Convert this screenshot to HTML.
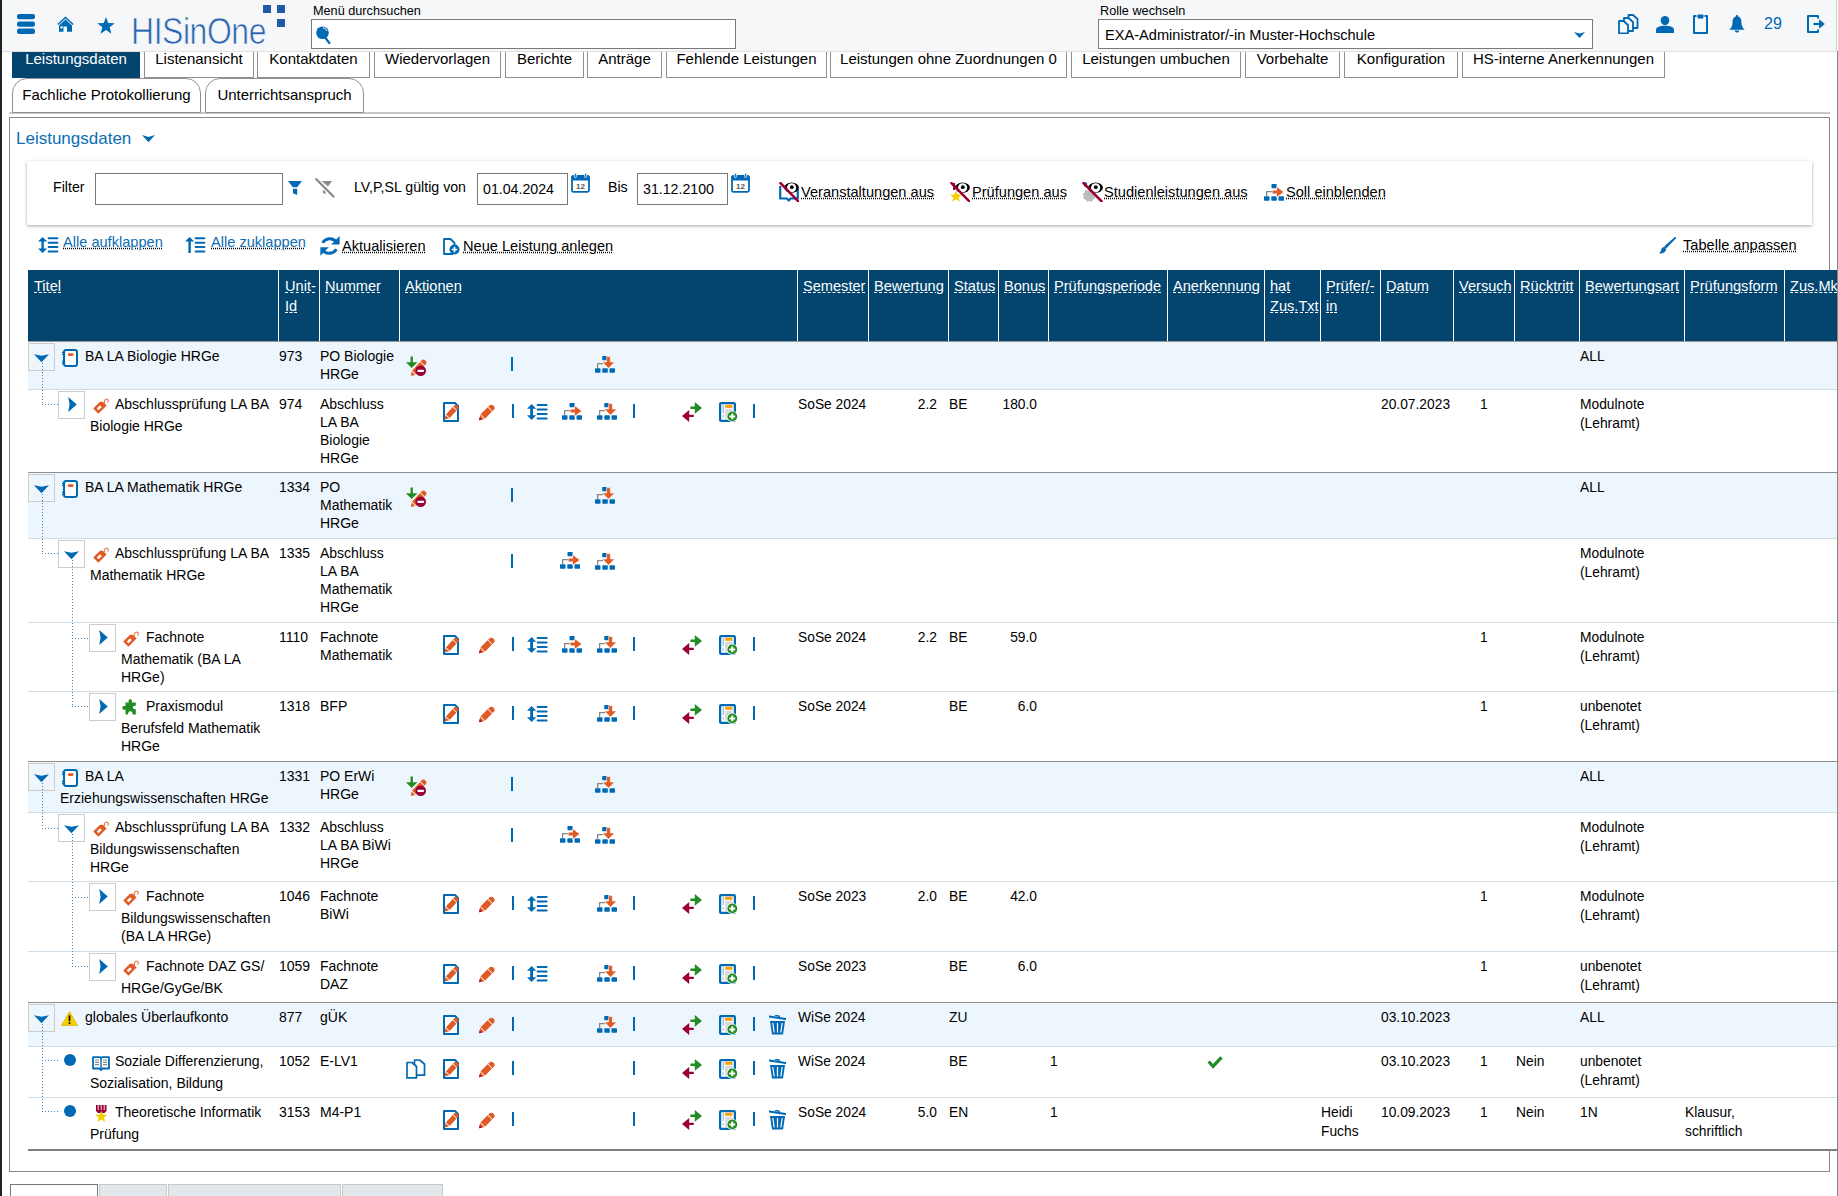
<!DOCTYPE html><html><head><meta charset="utf-8"><title>HISinOne</title><style>
html,body{margin:0;padding:0;background:#fff;overflow:hidden;width:1838px;height:1196px}
body{position:relative;font-family:"Liberation Sans",sans-serif;color:#222}
.t{position:absolute;white-space:nowrap}
.b{position:absolute;box-sizing:border-box}
.i{position:absolute;overflow:visible}
.u{text-decoration:underline dotted #000;text-underline-offset:1px}
.hu{text-decoration:underline dashed;text-decoration-thickness:1px;text-underline-offset:1px}
</style></head><body>

<svg width="0" height="0" style="position:absolute">
<defs>
<symbol id="ham" viewBox="0 0 18 20"><rect x="0" y="0" width="18" height="5.3" rx="2.2" fill="#0069b4"/><rect x="0" y="7.4" width="18" height="5.3" rx="2.2" fill="#0069b4"/><rect x="0" y="14.6" width="18" height="5.3" rx="2.2" fill="#0069b4"/></symbol>
<symbol id="home" viewBox="0 0 17 16"><path d="M8.5 0.5 L0.3 8 L1.3 9 L8.5 2.4 L15.7 9 L16.7 8 Z" fill="#0069b4"/><path d="M8.5 3.6 L2 9.4 V15.8 H6.5 V10.5 H10 V15.8 H15 V9.4 Z" fill="#0069b4"/><rect x="3.5" y="10.3" width="2.2" height="2.2" fill="#fff"/></symbol>
<symbol id="star" viewBox="0 0 18 17"><path d="M9 0 L11.2 6.1 L17.8 6.3 L12.6 10.3 L14.5 16.8 L9 13 L3.5 16.8 L5.4 10.3 L0.2 6.3 L6.8 6.1 Z" fill="#0069b4"/></symbol>
<symbol id="mag" viewBox="0 0 15 18"><circle cx="6.5" cy="6.8" r="6.3" fill="#0069b4"/><path d="M7 1.8 A4.6 4.6 0 0 1 11 5" stroke="#fff" stroke-width="1" fill="none"/><path d="M9.5 12 L13.3 17" stroke="#0069b4" stroke-width="2.2" stroke-linecap="round"/></symbol>
<symbol id="chevd" viewBox="0 0 11 6"><path d="M0 0 L5.5 1.6 L11 0 L5.5 6 Z" fill="#0069b4"/></symbol>
<symbol id="copy3" viewBox="0 0 21 20"><g fill="#f7f8fa" stroke="#0069b4" stroke-width="1.8" stroke-linejoin="round"><path d="M10.5 1 H15 L19.5 5 V14 H10.5 Z"/><path d="M6 4 H10.5 L15 8 V17 H6 Z"/><path d="M1 7 H5.5 L10 11 V19.4 H1 Z"/></g></symbol>
<symbol id="user" viewBox="0 0 18 17"><ellipse cx="9" cy="4.6" rx="4.3" ry="4.6" fill="#0069b4"/><path d="M0 17 V13.5 C0 11 4 9.7 9 9.7 C14 9.7 18 11 18 13.5 V17 Z" fill="#0069b4"/></symbol>
<symbol id="clip" viewBox="0 0 15 20"><path d="M3.5 2 H1 V19 H14 V2 H11.5" fill="none" stroke="#0069b4" stroke-width="2" stroke-linejoin="round"/><rect x="4.5" y="0.6" width="6" height="3.8" rx="0.8" fill="#0069b4"/></symbol>
<symbol id="bell" viewBox="0 0 16 18"><circle cx="8" cy="1.3" r="1.2" fill="#0069b4"/><path d="M8 1.5 C4.3 1.5 3.5 4.5 3.5 8 C3.5 11.5 2 13 0.3 14.8 H15.7 C14 13 12.5 11.5 12.5 8 C12.5 4.5 11.7 1.5 8 1.5 Z" fill="#0069b4"/><path d="M5.5 15.5 H10.5 C10 17 9 17.6 8 17.6 C7 17.6 6 17 5.5 15.5 Z" fill="#0069b4"/></symbol>
<symbol id="logout" viewBox="0 0 18 18"><path d="M11 3.5 V1 H1 V17 H11 V14.5" fill="none" stroke="#0069b4" stroke-width="2" stroke-linejoin="round"/><path d="M6.5 9 H13" stroke="#0069b4" stroke-width="2.2"/><path d="M12 4.2 L17.8 9 L12 13.8 Z" fill="#0069b4"/></symbol>
<symbol id="funnel" viewBox="0 0 14 14"><path d="M0 0 H14 L9.3 6 H4.7 Z" fill="#0069b4"/><path d="M4.8 6.3 H9.2 V7.5 H4.8Z" fill="#9cc3e3"/><path d="M5 8 H9.2 V14 L5 12.3 Z" fill="#0069b4"/></symbol>
<symbol id="funnelx" viewBox="0 0 20 20"><path d="M6.5 3 H17 L13 8.5 Z" fill="#8a8a8a"/><path d="M8 11.5 L10.5 14 V16.2 L8 15 Z" fill="#8a8a8a"/><path d="M1.3 1.2 L18.5 18.5" stroke="#8a8a8a" stroke-width="2.3" stroke-linecap="round"/></symbol>
<symbol id="cal" viewBox="0 0 19 20"><rect x="1" y="3" width="17" height="15.8" rx="1.5" fill="#fff" stroke="#0069b4" stroke-width="1.8"/><rect x="0.6" y="2.4" width="17.8" height="5" rx="1.2" fill="#0069b4"/><rect x="3.4" y="0.2" width="2" height="4.4" rx="1" fill="#0069b4" stroke="#fff" stroke-width="0.8"/><rect x="13.6" y="0.2" width="2" height="4.4" rx="1" fill="#0069b4" stroke="#fff" stroke-width="0.8"/><text x="9.5" y="16" font-family="Liberation Sans" font-weight="bold" font-size="8" fill="#555" text-anchor="middle">12</text></symbol>
<symbol id="eyedoc" viewBox="0 0 20 20"><path d="M1.2 4 V16.5 H8 L9.8 18.5 L11.6 16.5 H18.8 V7" fill="none" stroke="#0069b4" stroke-width="2.2" stroke-linejoin="round"/><ellipse cx="12.6" cy="5.6" rx="7.3" ry="5.2" fill="#000"/><ellipse cx="12.6" cy="5.7" rx="4.6" ry="4.5" fill="#fff"/><circle cx="12.8" cy="5.2" r="1.9" fill="#000"/><path d="M1.5 1.2 L19.2 19.2" stroke="#9b0034" stroke-width="2.6" stroke-linecap="round"/></symbol>
<symbol id="eyestar" viewBox="0 0 20 20"><path d="M4 1 V8" stroke="#9b0034" stroke-width="2"/><path d="M6 8.5 L7.6 12.6 L12 12.8 L8.6 15.5 L9.8 19.8 L6 17.3 L2.2 19.8 L3.4 15.5 L0 12.8 L4.4 12.6 Z" fill="#f5cc00"/><ellipse cx="12.6" cy="5.6" rx="7.3" ry="5.2" fill="#000"/><ellipse cx="12.6" cy="5.7" rx="4.6" ry="4.5" fill="#fff"/><circle cx="12.8" cy="5.2" r="1.9" fill="#000"/><path d="M1.5 1.2 L19.2 19.2" stroke="#9b0034" stroke-width="2.6" stroke-linecap="round"/></symbol>
<symbol id="eyegear" viewBox="0 0 21 20"><rect x="2" y="0.5" width="3" height="4" fill="#0069b4"/><circle cx="7" cy="13.5" r="5.3" fill="#bbb"/><path d="M7 6.5 L8.3 8.5 L11 8 L11.3 10.7 L13.8 12 L12.3 14.2 L13.5 16.6 L10.8 17.3 L10 20 L7.5 18.7 L5 20 L4.2 17.3 L1.2 16.8 L2 14 L0.4 12 L2.8 10.8 L3.1 8 L5.8 8.5 Z" fill="#bbb"/><ellipse cx="13.6" cy="5.6" rx="7.3" ry="5.2" fill="#000"/><ellipse cx="13.6" cy="5.7" rx="4.6" ry="4.5" fill="#fff"/><circle cx="13.8" cy="5.2" r="1.9" fill="#000"/><path d="M1.5 1.2 L19.5 19.2" stroke="#9b0034" stroke-width="2.6" stroke-linecap="round"/></symbol>
<symbol id="treer" viewBox="0 0 20 17"><rect x="7.5" y="0" width="5.2" height="4.2" rx="0.8" fill="#0069b4"/><path d="M2.6 12 V7.6 H9" fill="none" stroke="#888" stroke-width="1.3"/><rect x="0" y="12.2" width="5.5" height="4.6" rx="0.8" fill="#0069b4"/><rect x="7.3" y="12.2" width="5.5" height="4.6" rx="0.8" fill="#0069b4"/><rect x="14.5" y="12.2" width="5.5" height="4.6" rx="0.8" fill="#0069b4"/><path d="M8.3 6.2 H12.6 V2.6 L19.8 8 L12.6 13.4 V9.8 H8.3 Z" fill="#e05a24" stroke="#fff" stroke-width="0.6"/></symbol>
<symbol id="treed" viewBox="0 0 20 17"><rect x="7.2" y="0" width="5" height="4.2" rx="0.8" fill="#0069b4"/><path d="M2.6 12 V7.6 H8" fill="none" stroke="#888" stroke-width="1.3"/><rect x="0" y="12.2" width="5.5" height="4.6" rx="0.8" fill="#0069b4"/><rect x="7.3" y="12.2" width="5.5" height="4.6" rx="0.8" fill="#0069b4"/><rect x="14.5" y="12.2" width="5.5" height="4.6" rx="0.8" fill="#0069b4"/><path d="M11.6 0.6 H15.4 V6 H19.6 L13.5 12.3 L7.4 6 H11.6 Z" fill="#e05a24" stroke="#fff" stroke-width="0.6"/></symbol>
<symbol id="expall" viewBox="0 0 21 16"><path d="M4.6 0 L9.2 4.6 H5.8 V11.4 H9.2 L4.6 16 L0 11.4 H3.4 V4.6 H0 Z" fill="#0069b4"/><rect x="9.6" y="0.3" width="10.8" height="2" rx="1" fill="#0069b4"/><rect x="9.6" y="4.7" width="10.8" height="2" rx="1" fill="#0069b4"/><rect x="9.6" y="9.1" width="10.8" height="2" rx="1" fill="#0069b4"/><rect x="9.6" y="13.5" width="10.8" height="2" rx="1" fill="#0069b4"/></symbol>
<symbol id="colall" viewBox="0 0 21 16"><path d="M4.6 0 L9.2 4.6 H5.8 V16 H3.4 V4.6 H0 Z" fill="#0069b4"/><rect x="9.6" y="0.3" width="10.8" height="2" rx="1" fill="#0069b4"/><rect x="9.6" y="4.7" width="10.8" height="2" rx="1" fill="#0069b4"/><rect x="9.6" y="9.1" width="10.8" height="2" rx="1" fill="#0069b4"/><rect x="9.6" y="13.5" width="10.8" height="2" rx="1" fill="#0069b4"/></symbol>
<symbol id="refresh" viewBox="0 0 21 20"><path d="M3.6 6.8 C6.5 2.2 13.5 0.8 17.2 5.8" fill="none" stroke="#0069b4" stroke-width="3"/><path d="M20.6 0 V8.6 H12.2 Z" fill="#0069b4"/><path d="M17.4 13.2 C14.5 17.8 7.5 19.2 3.8 14.2" fill="none" stroke="#0069b4" stroke-width="3"/><path d="M1.4 11.2 H9.8 L1.4 19.7 Z" fill="#0069b4"/></symbol>
<symbol id="newdoc" viewBox="0 0 17 17"><path d="M10 16 H1 V1 H7.5 L11.5 5 V8" fill="none" stroke="#0069b4" stroke-width="1.8" stroke-linejoin="round"/><circle cx="11.5" cy="11.5" r="5" fill="#0069b4"/><path d="M11.5 8.8 V14.2 M8.8 11.5 H14.2" stroke="#fff" stroke-width="1.6"/></symbol>
<symbol id="brush" viewBox="0 0 17 17"><path d="M16.5 0.5 L7 10.5 L6.2 9.7 Z" fill="#0069b4" stroke="#0069b4" stroke-width="1.6" stroke-linejoin="round"/><path d="M5.5 10 C3 10 2.3 12 2 13.5 C1.8 14.8 1 15.5 0 16.5 C3 16.8 6.5 16 7.2 12 Z" fill="#0069b4"/></symbol>
<symbol id="tchevd" viewBox="0 0 15 8.4"><path d="M0 0.2 L7.5 1.7 L15 0.2 L7.5 8.3 Z" fill="#0069b4"/></symbol>
<symbol id="tchevr" viewBox="0 0 9 15"><path d="M0.2 0 L8.8 7.5 L0.2 15 L1.6 7.5 Z" fill="#0069b4"/></symbol>
<symbol id="note" viewBox="0 0 16 18"><rect x="2" y="1" width="13" height="16" rx="2.2" fill="#fff" stroke="#0069b4" stroke-width="2"/><rect x="5.8" y="4.2" width="5.8" height="2.8" rx="1.4" fill="#e05a24"/><path d="M0 3.3 H3.2 M0 5.3 H3.2 M0 12.3 H3.2 M0 14.5 H3.2" stroke="#0069b4" stroke-width="1.3"/><path d="M1.6 3 V15" stroke="#0069b4" stroke-width="1.2"/></symbol>
<symbol id="tag" viewBox="0 0 16 16"><g transform="translate(2.8,13.2) rotate(-45)"><path d="M0.7 -3.65 H9.6 L11.6 -1.6 V3.65 H0.7 A0.7 0.7 0 0 1 0 2.95 V-2.95 A0.7 0.7 0 0 1 0.7 -3.65Z" fill="#e05a24"/><rect x="2.6" y="-1.3" width="4.6" height="2.6" fill="#fff"/></g><path d="M11.6 5.2 C11 3 12 1 13.6 1.1 C15.4 1.2 15.9 3 14.6 4.6" fill="none" stroke="#e05a24" stroke-width="1.1" opacity="0.8"/></symbol>
<symbol id="puzzle" viewBox="0 0 16 16"><path d="M3.5 3.5 H6.8 C6.3 2.5 6.5 0.3 8.3 0.3 C10 0.3 10.3 2.5 9.8 3.5 H13.8 V7 C12.8 6.5 10.8 7 10.8 8.5 C10.8 10 12.8 10.5 13.8 10 V15.5 H10.5 C11 14.5 10 12.3 8.3 12.3 C6.5 12.3 5.8 14.5 6.2 15.5 H3.5 V10.5 C2.5 11 0.2 10.5 0.2 8.8 C0.2 7 2.5 6.8 3.5 7.2 Z" fill="#228b22"/></symbol>
<symbol id="warn" viewBox="0 0 17 15"><path d="M8.5 0.5 L16.7 14.5 H0.3 Z" fill="#f7d000" stroke="#d9a800" stroke-width="0.6" stroke-linejoin="round"/><rect x="7.6" y="4.3" width="1.8" height="6" rx="0.6" fill="#111"/><rect x="7.6" y="11.3" width="1.8" height="1.8" fill="#111"/></symbol>
<symbol id="book" viewBox="0 0 18 15"><path d="M1 1.2 H7.5 C8.3 1.2 9 1.8 9 2.5 C9 1.8 9.7 1.2 10.5 1.2 H17 V12.5 H10.5 L9 14 L7.5 12.5 H1 Z" fill="#fff" stroke="#0069b4" stroke-width="1.8" stroke-linejoin="round"/><path d="M3 4 H7 M3 6.3 H7 M3 8.6 H7 M11 4 H15 M11 6.3 H15 M11 8.6 H15" stroke="#888" stroke-width="1.2"/><path d="M9 2.5 V13" stroke="#0069b4" stroke-width="1.4"/></symbol>
<symbol id="medal" viewBox="0 0 15 18"><path d="M2 0 H12.5 V6 L10.5 8 H4 L2 6 Z" fill="#9b0034"/><path d="M4.2 0 V5 M7.2 0 V5 M10.2 0 V5" stroke="#fff" stroke-width="0.9"/><path d="M7.3 5.8 L9 9.6 L13.3 9.9 L10 12.6 L11.1 17 L7.3 14.6 L3.5 17 L4.6 12.6 L1.3 9.9 L5.6 9.6 Z" fill="#f5cc00"/></symbol>
<symbol id="dlminus" viewBox="0 0 22 21"><g transform="translate(5.9,20) rotate(-47)"><path d="M4.2 -2.8 H18.5 A2.8 2.8 0 0 1 18.5 2.8 H4.2 Z" fill="#e05a24"/><path d="M0 0 L4.2 -2.8 V2.8 Z" fill="#e05a24"/><rect x="3.9" y="-2.9" width="0.8" height="5.8" fill="#fff"/><rect x="16.4" y="-2.9" width="0.8" height="5.8" fill="#fff"/></g><path d="M6.7 0.5 V7" stroke="#fff" stroke-width="4.5"/><path d="M6.7 0.5 V7" stroke="#238b22" stroke-width="2.4"/><path d="M0.9 6.2 H12.5 L6.7 11.9 Z" fill="#238b22"/><circle cx="15.7" cy="14.8" r="5.3" fill="#9b0034"/><rect x="12.3" y="13.8" width="6.8" height="2.1" rx="0.8" fill="#fff"/></symbol>
<symbol id="docedit" viewBox="0 0 16 20"><path d="M1 1 H12 L15 4 V19 H1 Z" fill="#fff" stroke="#0069b4" stroke-width="2" stroke-linejoin="round"/><g transform="translate(1.6,17.6) rotate(-47)"><path d="M4.2 -2.6 H16.5 A2.6 2.6 0 0 1 16.5 2.6 H4.2 Z" fill="#e05a24"/><path d="M0 0 L4.2 -2.6 V2.6 Z" fill="#e05a24"/><rect x="3.9" y="-2.7" width="0.8" height="5.4" fill="#fff"/><rect x="14.6" y="-2.7" width="0.8" height="5.4" fill="#fff"/></g></symbol>
<symbol id="pencil" viewBox="0 0 17 18"><g transform="translate(1,17.3) rotate(-45)"><path d="M5 -3.1 H17.5 A3.1 3.1 0 0 1 17.5 3.1 H5 Z" fill="#e05a24"/><path d="M0 0 L5 -3.1 V3.1 Z" fill="#e05a24"/><path d="M0 0 L2.6 -1.6 V1.6 Z" fill="#9b0034"/><rect x="4.6" y="-3.2" width="0.9" height="6.4" fill="#fff"/><rect x="15.2" y="-3.2" width="0.9" height="6.4" fill="#fff"/></g></symbol>
<symbol id="indent" viewBox="0 0 21 16"><path d="M4.6 0 L9.2 4.8 H6 V11.2 H9.2 L4.6 16 L0 11.2 H3.2 V4.8 H0 Z" fill="#0069b4"/><rect x="9.6" y="0" width="11" height="2" rx="1" fill="#0069b4"/><rect x="9.6" y="4.6" width="11" height="2" rx="1" fill="#0069b4"/><rect x="9.6" y="9.1" width="11" height="2" rx="1" fill="#0069b4"/><rect x="9.6" y="13.6" width="11" height="2" rx="1" fill="#0069b4"/></symbol>
<symbol id="swap" viewBox="0 0 21 20"><path d="M8.4 4.6 H12.8 V0 L20 5.9 L12.8 11.8 V7 H8.4 Z" fill="#238b22"/><path d="M11.8 12.7 H7.2 V8.1 L0 14 L7.2 19.9 V15.1 H11.8 Z" fill="#9b0034"/></symbol>
<symbol id="docplus" viewBox="0 0 19 20"><rect x="1.1" y="1.1" width="14.8" height="17.8" rx="1" fill="#fff" stroke="#0069b4" stroke-width="2.2"/><rect x="3.6" y="3" width="1.3" height="8" fill="#8fbde0"/><rect x="6.2" y="2.8" width="7.3" height="3" fill="#ffa000"/><rect x="6.2" y="6.8" width="7.3" height="10" fill="#d9d9d9"/><rect x="3.6" y="13" width="1.3" height="3" fill="#ccc"/><circle cx="13.3" cy="14.4" r="5.6" fill="#fff"/><circle cx="13.3" cy="14.4" r="4.9" fill="#238b22"/><path d="M13.3 11.5 V17.3 M10.4 14.4 H16.2" stroke="#fff" stroke-width="2"/></symbol>
<symbol id="trash" viewBox="0 0 17 20"><path d="M0.3 1.5 L16.5 4" stroke="#0069b4" stroke-width="2" stroke-linecap="round"/><path d="M6 1.2 C6.2 0.3 10.5 0.8 10.6 1.9" fill="none" stroke="#0069b4" stroke-width="1.4"/><path d="M1 6 H16 L14 19.5 H3 Z" fill="#0069b4"/><path d="M3.8 8 L5.2 17.5 M8.5 8 V17.5 M13.2 8 L11.8 17.5" stroke="#fff" stroke-width="1.2"/></symbol>
<symbol id="copy2" viewBox="0 0 20 20"><g fill="#fff" stroke="#0069b4" stroke-width="1.7" stroke-linejoin="round"><path d="M8.5 1 H13.5 L18.5 5 V16.2 H8.5 Z"/><path d="M1 3.5 H6 L10.5 7.5 V18.9 H1 Z"/></g></symbol>
<symbol id="check" viewBox="0 0 16 13"><path d="M0.5 6.5 L2.8 4.4 L6 8 L13.3 0.3 L15.7 2.4 L6 12.7 Z" fill="#238b22"/></symbol>
</defs></svg>

<div class="b" style="left:0px;top:0px;width:2px;height:1196px;background:#1e2320"></div>
<div class="b" style="left:1837px;top:51px;width:1px;height:1145px;background:#858585"></div>
<div class="b" style="left:12px;top:42px;width:128px;height:36px;background:#04456f"></div>
<div class="t " style="left:12px;top:50px;font-size:15px;line-height:18px;color:#fff;width:128px;text-align:center">Leistungsdaten</div>
<div class="b" style="left:144px;top:42px;width:110px;height:36px;border:1px solid #909090;background:#fff"></div>
<div class="t " style="left:144px;top:50px;font-size:15px;line-height:18px;color:#000;width:110px;text-align:center">Listenansicht</div>
<div class="b" style="left:257px;top:42px;width:113px;height:36px;border:1px solid #909090;background:#fff"></div>
<div class="t " style="left:257px;top:50px;font-size:15px;line-height:18px;color:#000;width:113px;text-align:center">Kontaktdaten</div>
<div class="b" style="left:374px;top:42px;width:127px;height:36px;border:1px solid #909090;background:#fff"></div>
<div class="t " style="left:374px;top:50px;font-size:15px;line-height:18px;color:#000;width:127px;text-align:center">Wiedervorlagen</div>
<div class="b" style="left:505px;top:42px;width:79px;height:36px;border:1px solid #909090;background:#fff"></div>
<div class="t " style="left:505px;top:50px;font-size:15px;line-height:18px;color:#000;width:79px;text-align:center">Berichte</div>
<div class="b" style="left:587px;top:42px;width:75px;height:36px;border:1px solid #909090;background:#fff"></div>
<div class="t " style="left:587px;top:50px;font-size:15px;line-height:18px;color:#000;width:75px;text-align:center">Anträge</div>
<div class="b" style="left:666px;top:42px;width:161px;height:36px;border:1px solid #909090;background:#fff"></div>
<div class="t " style="left:666px;top:50px;font-size:15px;line-height:18px;color:#000;width:161px;text-align:center">Fehlende Leistungen</div>
<div class="b" style="left:830px;top:42px;width:237px;height:36px;border:1px solid #909090;background:#fff"></div>
<div class="t " style="left:830px;top:50px;font-size:15px;line-height:18px;color:#000;width:237px;text-align:center">Leistungen ohne Zuordnungen 0</div>
<div class="b" style="left:1071px;top:42px;width:170px;height:36px;border:1px solid #909090;background:#fff"></div>
<div class="t " style="left:1071px;top:50px;font-size:15px;line-height:18px;color:#000;width:170px;text-align:center">Leistungen umbuchen</div>
<div class="b" style="left:1245px;top:42px;width:95px;height:36px;border:1px solid #909090;background:#fff"></div>
<div class="t " style="left:1245px;top:50px;font-size:15px;line-height:18px;color:#000;width:95px;text-align:center">Vorbehalte</div>
<div class="b" style="left:1344px;top:42px;width:114px;height:36px;border:1px solid #909090;background:#fff"></div>
<div class="t " style="left:1344px;top:50px;font-size:15px;line-height:18px;color:#000;width:114px;text-align:center">Konfiguration</div>
<div class="b" style="left:1462px;top:42px;width:203px;height:36px;border:1px solid #909090;background:#fff"></div>
<div class="t " style="left:1462px;top:50px;font-size:15px;line-height:18px;color:#000;width:203px;text-align:center">HS-interne Anerkennungen</div>
<div class="b" style="left:9px;top:112px;width:1821px;height:2px;background:#c8c8c8"></div>
<div class="b" style="left:12px;top:78px;width:189px;height:35px;border:1px solid #909090;border-radius:15px 15px 0 0;background:#fff"></div>
<div class="t " style="left:12px;top:86px;font-size:15px;line-height:18px;color:#000;width:189px;text-align:center">Fachliche Protokollierung</div>
<div class="b" style="left:205px;top:78px;width:159px;height:35px;border:1px solid #909090;border-radius:15px 15px 0 0;background:#fff"></div>
<div class="t " style="left:205px;top:86px;font-size:15px;line-height:18px;color:#000;width:159px;text-align:center">Unterrichtsanspruch</div>
<div class="b" style="left:2px;top:0px;width:1835px;height:52px;background:#f6f7f9;border-bottom:1px solid #e6dede;z-index:2"></div>
<div style="position:absolute;left:0;top:0;width:1838px;height:51px;z-index:3">
<div class="b" style="left:1836px;top:0px;width:1px;height:51px;background:#d0d0d0"></div>
<svg class="i" style="left:17px;top:14px" width="18" height="20"><use href="#ham"/></svg>
<svg class="i" style="left:57px;top:16px" width="17" height="16"><use href="#home"/></svg>
<svg class="i" style="left:97px;top:17px" width="18" height="17"><use href="#star"/></svg>
<div class="t" style="left:131px;top:10px;font-size:36px;line-height:44px;color:#2a64ad;transform:scaleX(0.888);transform-origin:0 0;-webkit-text-stroke:0.7px #f6f7f9;letter-spacing:-0.5px">HISinOne</div>
<div class="b" style="left:263px;top:5px;width:8px;height:8px;background:#1d5aa8"></div>
<div class="b" style="left:277px;top:5px;width:8px;height:8px;background:#1d5aa8"></div>
<div class="b" style="left:277px;top:19px;width:8px;height:8px;background:#1d5aa8"></div>
<div class="t " style="left:313px;top:2px;font-size:12.7px;line-height:18px;color:#000;">Menü durchsuchen</div>
<div class="b" style="left:311px;top:19px;width:425px;height:30px;border:1px solid #7a7a7a;background:#fff"></div>
<svg class="i" style="left:316px;top:26px" width="15" height="18"><use href="#mag"/></svg>
<div class="t " style="left:1100px;top:2px;font-size:12.7px;line-height:18px;color:#000;">Rolle wechseln</div>
<div class="b" style="left:1098px;top:19px;width:495px;height:30px;border:1px solid #7a7a7a;background:#fff"></div>
<div class="t " style="left:1105px;top:26px;font-size:14.6px;line-height:18px;color:#000;">EXA-Administrator/-in Muster-Hochschule</div>
<svg class="i" style="left:1574px;top:32px" width="11" height="6"><use href="#chevd"/></svg>
<svg class="i" style="left:1618px;top:14px" width="21" height="20"><use href="#copy3"/></svg>
<svg class="i" style="left:1656px;top:16px" width="18" height="17"><use href="#user"/></svg>
<svg class="i" style="left:1693px;top:14px" width="15" height="20"><use href="#clip"/></svg>
<svg class="i" style="left:1729px;top:15px" width="16" height="18"><use href="#bell"/></svg>
<div class="t " style="left:1764px;top:15px;font-size:16px;line-height:18px;color:#0069b4;">29</div>
<svg class="i" style="left:1807px;top:15px" width="18" height="18"><use href="#logout"/></svg>
</div>
<div class="b" style="left:9px;top:117px;width:1821px;height:1055px;border:1px solid #8a8a8a"></div>
<div class="t " style="left:16px;top:130px;font-size:17px;line-height:18px;color:#0a6eb4;">Leistungsdaten</div>
<svg class="i" style="left:142px;top:135px" width="13" height="7"><path d="M0 0 L6.5 2 L13 0 L6.5 7.3 Z" fill="#0069b4"/></svg>
<div class="b" style="left:27px;top:161px;width:1785px;height:64px;background:#fff;box-shadow:0 1px 3px rgba(0,0,0,.35)"></div>
<div class="t " style="left:53px;top:178px;font-size:14.2px;line-height:18px;color:#000;">Filter</div>
<div class="b" style="left:95px;top:173px;width:188px;height:32px;border:1px solid #777;background:#fff"></div>
<svg class="i" style="left:288px;top:181px" width="14" height="14"><use href="#funnel"/></svg>
<svg class="i" style="left:315px;top:178px" width="20" height="20"><use href="#funnelx"/></svg>
<div class="t " style="left:354px;top:178px;font-size:14.2px;line-height:18px;color:#000;">LV,P,SL gültig von</div>
<div class="b" style="left:477px;top:173px;width:91px;height:32px;border:1px solid #777;background:#fff"></div>
<div class="t " style="left:483px;top:180px;font-size:14.2px;line-height:18px;color:#000;">01.04.2024</div>
<svg class="i" style="left:571px;top:173px" width="19" height="20"><use href="#cal"/></svg>
<div class="t " style="left:608px;top:178px;font-size:14.2px;line-height:18px;color:#000;">Bis</div>
<div class="b" style="left:637px;top:173px;width:91px;height:32px;border:1px solid #777;background:#fff"></div>
<div class="t " style="left:643px;top:180px;font-size:14.2px;line-height:18px;color:#000;">31.12.2100</div>
<svg class="i" style="left:731px;top:173px" width="19" height="20"><use href="#cal"/></svg>
<svg class="i" style="left:779px;top:182px" width="20" height="20"><use href="#eyedoc"/></svg>
<div class="t u" style="left:801px;top:183px;font-size:14.6px;line-height:18px;color:#000;">Veranstaltungen aus</div>
<svg class="i" style="left:950px;top:182px" width="20" height="20"><use href="#eyestar"/></svg>
<div class="t u" style="left:972px;top:183px;font-size:14.6px;line-height:18px;color:#000;">Prüfungen aus</div>
<svg class="i" style="left:1082px;top:182px" width="21" height="20"><use href="#eyegear"/></svg>
<div class="t u" style="left:1104px;top:183px;font-size:14.6px;line-height:18px;color:#000;">Studienleistungen aus</div>
<svg class="i" style="left:1264px;top:184px" width="20" height="17"><use href="#treer"/></svg>
<div class="t u" style="left:1286px;top:183px;font-size:14.6px;line-height:18px;color:#000;">Soll einblenden</div>
<svg class="i" style="left:38px;top:237px" width="21" height="16"><use href="#expall"/></svg>
<div class="t u" style="left:63px;top:233px;font-size:14.6px;line-height:18px;color:#0a6eb4;">Alle aufklappen</div>
<svg class="i" style="left:185px;top:237px" width="21" height="16"><use href="#colall"/></svg>
<div class="t u" style="left:211px;top:233px;font-size:14.6px;line-height:18px;color:#0a6eb4;">Alle zuklappen</div>
<svg class="i" style="left:319px;top:236px" width="21" height="20"><use href="#refresh"/></svg>
<div class="t u" style="left:342px;top:237px;font-size:14.6px;line-height:18px;color:#000;">Aktualisieren</div>
<svg class="i" style="left:443px;top:238px" width="17" height="17"><use href="#newdoc"/></svg>
<div class="t u" style="left:463px;top:237px;font-size:14.6px;line-height:18px;color:#000;">Neue Leistung anlegen</div>
<svg class="i" style="left:1659px;top:237px" width="17" height="17"><use href="#brush"/></svg>
<div class="t u" style="left:1683px;top:236px;font-size:14.6px;line-height:18px;color:#000;">Tabelle anpassen</div>
<div style="position:absolute;left:0;top:0;width:1837px;height:1196px;overflow:hidden">
<div class="b" style="left:28px;top:341px;width:1809px;height:810px;background:#fff"></div>
<div class="b" style="left:28px;top:270px;width:1809px;height:71px;background:#04456f"></div>
<div class="b" style="left:278px;top:270px;width:1px;height:71px;background:#fff"></div>
<div class="b" style="left:319px;top:270px;width:1px;height:71px;background:#fff"></div>
<div class="b" style="left:399px;top:270px;width:1px;height:71px;background:#fff"></div>
<div class="b" style="left:797px;top:270px;width:1px;height:71px;background:#fff"></div>
<div class="b" style="left:868px;top:270px;width:1px;height:71px;background:#fff"></div>
<div class="b" style="left:948px;top:270px;width:1px;height:71px;background:#fff"></div>
<div class="b" style="left:998px;top:270px;width:1px;height:71px;background:#fff"></div>
<div class="b" style="left:1048px;top:270px;width:1px;height:71px;background:#fff"></div>
<div class="b" style="left:1167px;top:270px;width:1px;height:71px;background:#fff"></div>
<div class="b" style="left:1264px;top:270px;width:1px;height:71px;background:#fff"></div>
<div class="b" style="left:1320px;top:270px;width:1px;height:71px;background:#fff"></div>
<div class="b" style="left:1380px;top:270px;width:1px;height:71px;background:#fff"></div>
<div class="b" style="left:1453px;top:270px;width:1px;height:71px;background:#fff"></div>
<div class="b" style="left:1514px;top:270px;width:1px;height:71px;background:#fff"></div>
<div class="b" style="left:1579px;top:270px;width:1px;height:71px;background:#fff"></div>
<div class="b" style="left:1684px;top:270px;width:1px;height:71px;background:#fff"></div>
<div class="b" style="left:1784px;top:270px;width:1px;height:71px;background:#fff"></div>
<div class="t hu" style="left:34px;top:277px;font-size:14.6px;line-height:18px;color:#fff;">Titel</div>
<div class="t hu" style="left:285px;top:277px;font-size:14.6px;line-height:18px;color:#fff;">Unit-</div>
<div class="t hu" style="left:285px;top:297px;font-size:14.6px;line-height:18px;color:#fff;">Id</div>
<div class="t hu" style="left:325px;top:277px;font-size:14.6px;line-height:18px;color:#fff;">Nummer</div>
<div class="t hu" style="left:405px;top:277px;font-size:14.6px;line-height:18px;color:#fff;">Aktionen</div>
<div class="t hu" style="left:803px;top:277px;font-size:14.6px;line-height:18px;color:#fff;">Semester</div>
<div class="t hu" style="left:874px;top:277px;font-size:14.6px;line-height:18px;color:#fff;">Bewertung</div>
<div class="t hu" style="left:954px;top:277px;font-size:14.6px;line-height:18px;color:#fff;">Status</div>
<div class="t hu" style="left:1004px;top:277px;font-size:14.6px;line-height:18px;color:#fff;">Bonus</div>
<div class="t hu" style="left:1054px;top:277px;font-size:14.6px;line-height:18px;color:#fff;">Prüfungsperiode</div>
<div class="t hu" style="left:1173px;top:277px;font-size:14.6px;line-height:18px;color:#fff;">Anerkennung</div>
<div class="t hu" style="left:1270px;top:277px;font-size:14.6px;line-height:18px;color:#fff;">hat</div>
<div class="t hu" style="left:1270px;top:297px;font-size:14.6px;line-height:18px;color:#fff;">Zus.Txt</div>
<div class="t hu" style="left:1326px;top:277px;font-size:14.6px;line-height:18px;color:#fff;">Prüfer/-</div>
<div class="t hu" style="left:1326px;top:297px;font-size:14.6px;line-height:18px;color:#fff;">in</div>
<div class="t hu" style="left:1386px;top:277px;font-size:14.6px;line-height:18px;color:#fff;">Datum</div>
<div class="t hu" style="left:1459px;top:277px;font-size:14.6px;line-height:18px;color:#fff;">Versuch</div>
<div class="t hu" style="left:1520px;top:277px;font-size:14.6px;line-height:18px;color:#fff;">Rücktritt</div>
<div class="t hu" style="left:1585px;top:277px;font-size:14.6px;line-height:18px;color:#fff;">Bewertungsart</div>
<div class="t hu" style="left:1690px;top:277px;font-size:14.6px;line-height:18px;color:#fff;">Prüfungsform</div>
<div class="t hu" style="left:1790px;top:277px;font-size:14.6px;line-height:18px;color:#fff;">Zus.Mk</div>
<div class="b" style="left:28px;top:341px;width:1809px;height:48px;background:#eef6fd"></div>
<div class="b" style="left:28px;top:472px;width:1809px;height:66px;background:#eef6fd"></div>
<div class="b" style="left:28px;top:761px;width:1809px;height:51px;background:#eef6fd"></div>
<div class="b" style="left:28px;top:1002px;width:1809px;height:44px;background:#eef6fd"></div>
<div class="b" style="left:28px;top:389px;width:1809px;height:1px;background:#cfdce5"></div>
<div class="b" style="left:28px;top:472px;width:1809px;height:1px;background:#8f8f8f"></div>
<div class="b" style="left:28px;top:538px;width:1809px;height:1px;background:#cfdce5"></div>
<div class="b" style="left:28px;top:622px;width:1809px;height:1px;background:#cfdce5"></div>
<div class="b" style="left:28px;top:691px;width:1809px;height:1px;background:#cfdce5"></div>
<div class="b" style="left:28px;top:761px;width:1809px;height:1px;background:#8f8f8f"></div>
<div class="b" style="left:28px;top:812px;width:1809px;height:1px;background:#cfdce5"></div>
<div class="b" style="left:28px;top:881px;width:1809px;height:1px;background:#cfdce5"></div>
<div class="b" style="left:28px;top:951px;width:1809px;height:1px;background:#cfdce5"></div>
<div class="b" style="left:28px;top:1002px;width:1809px;height:1px;background:#8f8f8f"></div>
<div class="b" style="left:28px;top:1046px;width:1809px;height:1px;background:#cfdce5"></div>
<div class="b" style="left:28px;top:1097px;width:1809px;height:1px;background:#cfdce5"></div>
<div class="b" style="left:28px;top:1149px;width:1809px;height:2px;background:#7f7f7f"></div>
<div class="b" style="left:28px;top:341px;width:1809px;height:1px;background:#9b9794"></div>
<div class="b" style="left:28px;top:343px;width:27px;height:28px;border:1px solid #cccccc;background:#eef6fd"></div>
<svg class="i" style="left:34px;top:353.6px" width="15" height="8.4"><use href="#tchevd"/></svg>
<svg class="i" style="left:62px;top:349px" width="16" height="18"><use href="#note"/></svg>
<div class="t " style="left:85px;top:347px;font-size:14px;line-height:18px;color:#000;">BA LA Biologie HRGe</div>
<div class="b" style="left:58px;top:391px;width:27px;height:28px;border:1px solid #cccccc;background:#fff"></div>
<svg class="i" style="left:68px;top:397px" width="9" height="15"><use href="#tchevr"/></svg>
<svg class="i" style="left:93px;top:398px" width="16" height="16"><use href="#tag"/></svg>
<div class="t " style="left:115px;top:395px;font-size:14px;line-height:18px;color:#000;">Abschlussprüfung LA BA</div>
<div class="t " style="left:90px;top:417px;font-size:14px;line-height:18px;color:#000;">Biologie HRGe</div>
<div class="b" style="left:28px;top:474px;width:27px;height:28px;border:1px solid #cccccc;background:#eef6fd"></div>
<svg class="i" style="left:34px;top:484.6px" width="15" height="8.4"><use href="#tchevd"/></svg>
<svg class="i" style="left:62px;top:480px" width="16" height="18"><use href="#note"/></svg>
<div class="t " style="left:85px;top:478px;font-size:14px;line-height:18px;color:#000;">BA LA Mathematik HRGe</div>
<div class="b" style="left:58px;top:540px;width:27px;height:28px;border:1px solid #cccccc;background:#fff"></div>
<svg class="i" style="left:64px;top:550.6px" width="15" height="8.4"><use href="#tchevd"/></svg>
<svg class="i" style="left:93px;top:547px" width="16" height="16"><use href="#tag"/></svg>
<div class="t " style="left:115px;top:544px;font-size:14px;line-height:18px;color:#000;">Abschlussprüfung LA BA</div>
<div class="t " style="left:90px;top:566px;font-size:14px;line-height:18px;color:#000;">Mathematik HRGe</div>
<div class="b" style="left:89px;top:624px;width:27px;height:28px;border:1px solid #cccccc;background:#fff"></div>
<svg class="i" style="left:99px;top:630px" width="9" height="15"><use href="#tchevr"/></svg>
<svg class="i" style="left:123px;top:631px" width="16" height="16"><use href="#tag"/></svg>
<div class="t " style="left:146px;top:628px;font-size:14px;line-height:18px;color:#000;">Fachnote</div>
<div class="t " style="left:121px;top:650px;font-size:14px;line-height:18px;color:#000;">Mathematik (BA LA</div>
<div class="t " style="left:121px;top:668px;font-size:14px;line-height:18px;color:#000;">HRGe)</div>
<div class="b" style="left:89px;top:693px;width:27px;height:28px;border:1px solid #cccccc;background:#fff"></div>
<svg class="i" style="left:99px;top:699px" width="9" height="15"><use href="#tchevr"/></svg>
<svg class="i" style="left:122px;top:699px" width="16" height="16"><use href="#puzzle"/></svg>
<div class="t " style="left:146px;top:697px;font-size:14px;line-height:18px;color:#000;">Praxismodul</div>
<div class="t " style="left:121px;top:719px;font-size:14px;line-height:18px;color:#000;">Berufsfeld Mathematik</div>
<div class="t " style="left:121px;top:737px;font-size:14px;line-height:18px;color:#000;">HRGe</div>
<div class="b" style="left:28px;top:763px;width:27px;height:28px;border:1px solid #cccccc;background:#eef6fd"></div>
<svg class="i" style="left:34px;top:773.6px" width="15" height="8.4"><use href="#tchevd"/></svg>
<svg class="i" style="left:62px;top:769px" width="16" height="18"><use href="#note"/></svg>
<div class="t " style="left:85px;top:767px;font-size:14px;line-height:18px;color:#000;">BA LA</div>
<div class="t " style="left:60px;top:789px;font-size:14px;line-height:18px;color:#000;">Erziehungswissenschaften HRGe</div>
<div class="b" style="left:58px;top:814px;width:27px;height:28px;border:1px solid #cccccc;background:#fff"></div>
<svg class="i" style="left:64px;top:824.6px" width="15" height="8.4"><use href="#tchevd"/></svg>
<svg class="i" style="left:93px;top:821px" width="16" height="16"><use href="#tag"/></svg>
<div class="t " style="left:115px;top:818px;font-size:14px;line-height:18px;color:#000;">Abschlussprüfung LA BA</div>
<div class="t " style="left:90px;top:840px;font-size:14px;line-height:18px;color:#000;">Bildungswissenschaften</div>
<div class="t " style="left:90px;top:858px;font-size:14px;line-height:18px;color:#000;">HRGe</div>
<div class="b" style="left:89px;top:883px;width:27px;height:28px;border:1px solid #cccccc;background:#fff"></div>
<svg class="i" style="left:99px;top:889px" width="9" height="15"><use href="#tchevr"/></svg>
<svg class="i" style="left:123px;top:890px" width="16" height="16"><use href="#tag"/></svg>
<div class="t " style="left:146px;top:887px;font-size:14px;line-height:18px;color:#000;">Fachnote</div>
<div class="t " style="left:121px;top:909px;font-size:14px;line-height:18px;color:#000;">Bildungswissenschaften</div>
<div class="t " style="left:121px;top:927px;font-size:14px;line-height:18px;color:#000;">(BA LA HRGe)</div>
<div class="b" style="left:89px;top:953px;width:27px;height:28px;border:1px solid #cccccc;background:#fff"></div>
<svg class="i" style="left:99px;top:959px" width="9" height="15"><use href="#tchevr"/></svg>
<svg class="i" style="left:123px;top:960px" width="16" height="16"><use href="#tag"/></svg>
<div class="t " style="left:146px;top:957px;font-size:14px;line-height:18px;color:#000;">Fachnote DAZ GS/</div>
<div class="t " style="left:121px;top:979px;font-size:14px;line-height:18px;color:#000;">HRGe/GyGe/BK</div>
<div class="b" style="left:28px;top:1004px;width:27px;height:28px;border:1px solid #cccccc;background:#eef6fd"></div>
<svg class="i" style="left:34px;top:1014.6px" width="15" height="8.4"><use href="#tchevd"/></svg>
<svg class="i" style="left:61px;top:1011px" width="17" height="15"><use href="#warn"/></svg>
<div class="t " style="left:85px;top:1008px;font-size:14px;line-height:18px;color:#000;">globales Überlaufkonto</div>
<div class="b" style="left:64px;top:1054px;width:12px;height:12px;background:#0069b4;border-radius:50%"></div>
<svg class="i" style="left:92px;top:1056px" width="18" height="15"><use href="#book"/></svg>
<div class="t " style="left:115px;top:1052px;font-size:14px;line-height:18px;color:#000;">Soziale Differenzierung,</div>
<div class="t " style="left:90px;top:1074px;font-size:14px;line-height:18px;color:#000;">Sozialisation, Bildung</div>
<div class="b" style="left:64px;top:1105px;width:12px;height:12px;background:#0069b4;border-radius:50%"></div>
<svg class="i" style="left:94px;top:1105px" width="15" height="18"><use href="#medal"/></svg>
<div class="t " style="left:115px;top:1103px;font-size:14px;line-height:18px;color:#000;">Theoretische Informatik</div>
<div class="t " style="left:90px;top:1125px;font-size:14px;line-height:18px;color:#000;">Prüfung</div>
<div class="b" style="left:42px;top:363px;width:1px;height:42px;background:repeating-linear-gradient(to bottom,#3a86c4 0 1px,transparent 1px 3px)"></div>
<div class="b" style="left:42px;top:404px;width:16px;height:1px;background:repeating-linear-gradient(to right,#3a86c4 0 1px,transparent 1px 3px)"></div>
<div class="b" style="left:42px;top:494px;width:1px;height:60px;background:repeating-linear-gradient(to bottom,#3a86c4 0 1px,transparent 1px 3px)"></div>
<div class="b" style="left:42px;top:553px;width:16px;height:1px;background:repeating-linear-gradient(to right,#3a86c4 0 1px,transparent 1px 3px)"></div>
<div class="b" style="left:72px;top:560px;width:1px;height:147px;background:repeating-linear-gradient(to bottom,#3a86c4 0 1px,transparent 1px 3px)"></div>
<div class="b" style="left:72px;top:638px;width:17px;height:1px;background:repeating-linear-gradient(to right,#3a86c4 0 1px,transparent 1px 3px)"></div>
<div class="b" style="left:72px;top:706px;width:17px;height:1px;background:repeating-linear-gradient(to right,#3a86c4 0 1px,transparent 1px 3px)"></div>
<div class="b" style="left:42px;top:783px;width:1px;height:46px;background:repeating-linear-gradient(to bottom,#3a86c4 0 1px,transparent 1px 3px)"></div>
<div class="b" style="left:42px;top:828px;width:16px;height:1px;background:repeating-linear-gradient(to right,#3a86c4 0 1px,transparent 1px 3px)"></div>
<div class="b" style="left:72px;top:834px;width:1px;height:133px;background:repeating-linear-gradient(to bottom,#3a86c4 0 1px,transparent 1px 3px)"></div>
<div class="b" style="left:72px;top:897px;width:17px;height:1px;background:repeating-linear-gradient(to right,#3a86c4 0 1px,transparent 1px 3px)"></div>
<div class="b" style="left:72px;top:966px;width:17px;height:1px;background:repeating-linear-gradient(to right,#3a86c4 0 1px,transparent 1px 3px)"></div>
<div class="b" style="left:42px;top:1024px;width:1px;height:88px;background:repeating-linear-gradient(to bottom,#3a86c4 0 1px,transparent 1px 3px)"></div>
<div class="b" style="left:42px;top:1060px;width:16px;height:1px;background:repeating-linear-gradient(to right,#3a86c4 0 1px,transparent 1px 3px)"></div>
<div class="b" style="left:42px;top:1111px;width:16px;height:1px;background:repeating-linear-gradient(to right,#3a86c4 0 1px,transparent 1px 3px)"></div>
<div class="t " style="left:279px;top:347px;font-size:14px;line-height:18px;color:#000;">973</div>
<div class="t " style="left:320px;top:347px;font-size:14px;line-height:18px;color:#000;">PO Biologie</div>
<div class="t " style="left:320px;top:365px;font-size:14px;line-height:18px;color:#000;">HRGe</div>
<div class="t " style="left:279px;top:395px;font-size:14px;line-height:18px;color:#000;">974</div>
<div class="t " style="left:320px;top:395px;font-size:14px;line-height:18px;color:#000;">Abschluss</div>
<div class="t " style="left:320px;top:413px;font-size:14px;line-height:18px;color:#000;">LA BA</div>
<div class="t " style="left:320px;top:431px;font-size:14px;line-height:18px;color:#000;">Biologie</div>
<div class="t " style="left:320px;top:449px;font-size:14px;line-height:18px;color:#000;">HRGe</div>
<div class="t " style="left:279px;top:478px;font-size:14px;line-height:18px;color:#000;">1334</div>
<div class="t " style="left:320px;top:478px;font-size:14px;line-height:18px;color:#000;">PO</div>
<div class="t " style="left:320px;top:496px;font-size:14px;line-height:18px;color:#000;">Mathematik</div>
<div class="t " style="left:320px;top:514px;font-size:14px;line-height:18px;color:#000;">HRGe</div>
<div class="t " style="left:279px;top:544px;font-size:14px;line-height:18px;color:#000;">1335</div>
<div class="t " style="left:320px;top:544px;font-size:14px;line-height:18px;color:#000;">Abschluss</div>
<div class="t " style="left:320px;top:562px;font-size:14px;line-height:18px;color:#000;">LA BA</div>
<div class="t " style="left:320px;top:580px;font-size:14px;line-height:18px;color:#000;">Mathematik</div>
<div class="t " style="left:320px;top:598px;font-size:14px;line-height:18px;color:#000;">HRGe</div>
<div class="t " style="left:279px;top:628px;font-size:14px;line-height:18px;color:#000;">1110</div>
<div class="t " style="left:320px;top:628px;font-size:14px;line-height:18px;color:#000;">Fachnote</div>
<div class="t " style="left:320px;top:646px;font-size:14px;line-height:18px;color:#000;">Mathematik</div>
<div class="t " style="left:279px;top:697px;font-size:14px;line-height:18px;color:#000;">1318</div>
<div class="t " style="left:320px;top:697px;font-size:14px;line-height:18px;color:#000;">BFP</div>
<div class="t " style="left:279px;top:767px;font-size:14px;line-height:18px;color:#000;">1331</div>
<div class="t " style="left:320px;top:767px;font-size:14px;line-height:18px;color:#000;">PO ErWi</div>
<div class="t " style="left:320px;top:785px;font-size:14px;line-height:18px;color:#000;">HRGe</div>
<div class="t " style="left:279px;top:818px;font-size:14px;line-height:18px;color:#000;">1332</div>
<div class="t " style="left:320px;top:818px;font-size:14px;line-height:18px;color:#000;">Abschluss</div>
<div class="t " style="left:320px;top:836px;font-size:14px;line-height:18px;color:#000;">LA BA BiWi</div>
<div class="t " style="left:320px;top:854px;font-size:14px;line-height:18px;color:#000;">HRGe</div>
<div class="t " style="left:279px;top:887px;font-size:14px;line-height:18px;color:#000;">1046</div>
<div class="t " style="left:320px;top:887px;font-size:14px;line-height:18px;color:#000;">Fachnote</div>
<div class="t " style="left:320px;top:905px;font-size:14px;line-height:18px;color:#000;">BiWi</div>
<div class="t " style="left:279px;top:957px;font-size:14px;line-height:18px;color:#000;">1059</div>
<div class="t " style="left:320px;top:957px;font-size:14px;line-height:18px;color:#000;">Fachnote</div>
<div class="t " style="left:320px;top:975px;font-size:14px;line-height:18px;color:#000;">DAZ</div>
<div class="t " style="left:279px;top:1008px;font-size:14px;line-height:18px;color:#000;">877</div>
<div class="t " style="left:320px;top:1008px;font-size:14px;line-height:18px;color:#000;">gÜK</div>
<div class="t " style="left:279px;top:1052px;font-size:14px;line-height:18px;color:#000;">1052</div>
<div class="t " style="left:320px;top:1052px;font-size:14px;line-height:18px;color:#000;">E-LV1</div>
<div class="t " style="left:279px;top:1103px;font-size:14px;line-height:18px;color:#000;">3153</div>
<div class="t " style="left:320px;top:1103px;font-size:14px;line-height:18px;color:#000;">M4-P1</div>
<svg class="i" style="left:405px;top:356px" width="22" height="21"><use href="#dlminus"/></svg>
<div class="b" style="left:511px;top:357px;width:2px;height:14px;background:#0069b4"></div>
<svg class="i" style="left:595px;top:356px" width="20" height="17"><use href="#treed"/></svg>
<svg class="i" style="left:443px;top:402px" width="16" height="20"><use href="#docedit"/></svg>
<svg class="i" style="left:478px;top:403px" width="17" height="18"><use href="#pencil"/></svg>
<div class="b" style="left:512px;top:404px;width:2px;height:14px;background:#0069b4"></div>
<svg class="i" style="left:527px;top:404px" width="21" height="16"><use href="#indent"/></svg>
<svg class="i" style="left:562px;top:403px" width="20" height="17"><use href="#treer"/></svg>
<svg class="i" style="left:597px;top:403px" width="20" height="17"><use href="#treed"/></svg>
<div class="b" style="left:633px;top:404px;width:2px;height:14px;background:#0069b4"></div>
<svg class="i" style="left:682px;top:402px" width="21" height="20"><use href="#swap"/></svg>
<svg class="i" style="left:719px;top:402px" width="19" height="20"><use href="#docplus"/></svg>
<div class="b" style="left:753px;top:404px;width:2px;height:14px;background:#0069b4"></div>
<svg class="i" style="left:405px;top:487px" width="22" height="21"><use href="#dlminus"/></svg>
<div class="b" style="left:511px;top:488px;width:2px;height:14px;background:#0069b4"></div>
<svg class="i" style="left:595px;top:487px" width="20" height="17"><use href="#treed"/></svg>
<div class="b" style="left:511px;top:554px;width:2px;height:14px;background:#0069b4"></div>
<svg class="i" style="left:560px;top:552px" width="20" height="17"><use href="#treer"/></svg>
<svg class="i" style="left:595px;top:553px" width="20" height="17"><use href="#treed"/></svg>
<svg class="i" style="left:443px;top:635px" width="16" height="20"><use href="#docedit"/></svg>
<svg class="i" style="left:478px;top:636px" width="17" height="18"><use href="#pencil"/></svg>
<div class="b" style="left:512px;top:637px;width:2px;height:14px;background:#0069b4"></div>
<svg class="i" style="left:527px;top:637px" width="21" height="16"><use href="#indent"/></svg>
<svg class="i" style="left:562px;top:636px" width="20" height="17"><use href="#treer"/></svg>
<svg class="i" style="left:597px;top:636px" width="20" height="17"><use href="#treed"/></svg>
<div class="b" style="left:633px;top:637px;width:2px;height:14px;background:#0069b4"></div>
<svg class="i" style="left:682px;top:635px" width="21" height="20"><use href="#swap"/></svg>
<svg class="i" style="left:719px;top:635px" width="19" height="20"><use href="#docplus"/></svg>
<div class="b" style="left:753px;top:637px;width:2px;height:14px;background:#0069b4"></div>
<svg class="i" style="left:443px;top:704px" width="16" height="20"><use href="#docedit"/></svg>
<svg class="i" style="left:478px;top:705px" width="17" height="18"><use href="#pencil"/></svg>
<div class="b" style="left:512px;top:706px;width:2px;height:14px;background:#0069b4"></div>
<svg class="i" style="left:527px;top:706px" width="21" height="16"><use href="#indent"/></svg>
<svg class="i" style="left:597px;top:705px" width="20" height="17"><use href="#treed"/></svg>
<div class="b" style="left:633px;top:706px;width:2px;height:14px;background:#0069b4"></div>
<svg class="i" style="left:682px;top:704px" width="21" height="20"><use href="#swap"/></svg>
<svg class="i" style="left:719px;top:704px" width="19" height="20"><use href="#docplus"/></svg>
<div class="b" style="left:753px;top:706px;width:2px;height:14px;background:#0069b4"></div>
<svg class="i" style="left:405px;top:776px" width="22" height="21"><use href="#dlminus"/></svg>
<div class="b" style="left:511px;top:777px;width:2px;height:14px;background:#0069b4"></div>
<svg class="i" style="left:595px;top:776px" width="20" height="17"><use href="#treed"/></svg>
<div class="b" style="left:511px;top:828px;width:2px;height:14px;background:#0069b4"></div>
<svg class="i" style="left:560px;top:826px" width="20" height="17"><use href="#treer"/></svg>
<svg class="i" style="left:595px;top:827px" width="20" height="17"><use href="#treed"/></svg>
<svg class="i" style="left:443px;top:894px" width="16" height="20"><use href="#docedit"/></svg>
<svg class="i" style="left:478px;top:895px" width="17" height="18"><use href="#pencil"/></svg>
<div class="b" style="left:512px;top:896px;width:2px;height:14px;background:#0069b4"></div>
<svg class="i" style="left:527px;top:896px" width="21" height="16"><use href="#indent"/></svg>
<svg class="i" style="left:597px;top:895px" width="20" height="17"><use href="#treed"/></svg>
<div class="b" style="left:633px;top:896px;width:2px;height:14px;background:#0069b4"></div>
<svg class="i" style="left:682px;top:894px" width="21" height="20"><use href="#swap"/></svg>
<svg class="i" style="left:719px;top:894px" width="19" height="20"><use href="#docplus"/></svg>
<div class="b" style="left:753px;top:896px;width:2px;height:14px;background:#0069b4"></div>
<svg class="i" style="left:443px;top:964px" width="16" height="20"><use href="#docedit"/></svg>
<svg class="i" style="left:478px;top:965px" width="17" height="18"><use href="#pencil"/></svg>
<div class="b" style="left:512px;top:966px;width:2px;height:14px;background:#0069b4"></div>
<svg class="i" style="left:527px;top:966px" width="21" height="16"><use href="#indent"/></svg>
<svg class="i" style="left:597px;top:965px" width="20" height="17"><use href="#treed"/></svg>
<div class="b" style="left:633px;top:966px;width:2px;height:14px;background:#0069b4"></div>
<svg class="i" style="left:682px;top:964px" width="21" height="20"><use href="#swap"/></svg>
<svg class="i" style="left:719px;top:964px" width="19" height="20"><use href="#docplus"/></svg>
<div class="b" style="left:753px;top:966px;width:2px;height:14px;background:#0069b4"></div>
<svg class="i" style="left:443px;top:1015px" width="16" height="20"><use href="#docedit"/></svg>
<svg class="i" style="left:478px;top:1016px" width="17" height="18"><use href="#pencil"/></svg>
<div class="b" style="left:512px;top:1017px;width:2px;height:14px;background:#0069b4"></div>
<svg class="i" style="left:597px;top:1016px" width="20" height="17"><use href="#treed"/></svg>
<div class="b" style="left:633px;top:1017px;width:2px;height:14px;background:#0069b4"></div>
<svg class="i" style="left:682px;top:1015px" width="21" height="20"><use href="#swap"/></svg>
<svg class="i" style="left:719px;top:1015px" width="19" height="20"><use href="#docplus"/></svg>
<div class="b" style="left:753px;top:1017px;width:2px;height:14px;background:#0069b4"></div>
<svg class="i" style="left:769px;top:1015px" width="17" height="20"><use href="#trash"/></svg>
<svg class="i" style="left:406px;top:1059px" width="20" height="20"><use href="#copy2"/></svg>
<svg class="i" style="left:443px;top:1059px" width="16" height="20"><use href="#docedit"/></svg>
<svg class="i" style="left:478px;top:1060px" width="17" height="18"><use href="#pencil"/></svg>
<div class="b" style="left:512px;top:1061px;width:2px;height:14px;background:#0069b4"></div>
<div class="b" style="left:633px;top:1061px;width:2px;height:14px;background:#0069b4"></div>
<svg class="i" style="left:682px;top:1059px" width="21" height="20"><use href="#swap"/></svg>
<svg class="i" style="left:719px;top:1059px" width="19" height="20"><use href="#docplus"/></svg>
<div class="b" style="left:753px;top:1061px;width:2px;height:14px;background:#0069b4"></div>
<svg class="i" style="left:769px;top:1059px" width="17" height="20"><use href="#trash"/></svg>
<svg class="i" style="left:443px;top:1110px" width="16" height="20"><use href="#docedit"/></svg>
<svg class="i" style="left:478px;top:1111px" width="17" height="18"><use href="#pencil"/></svg>
<div class="b" style="left:512px;top:1112px;width:2px;height:14px;background:#0069b4"></div>
<div class="b" style="left:633px;top:1112px;width:2px;height:14px;background:#0069b4"></div>
<svg class="i" style="left:682px;top:1110px" width="21" height="20"><use href="#swap"/></svg>
<svg class="i" style="left:719px;top:1110px" width="19" height="20"><use href="#docplus"/></svg>
<div class="b" style="left:753px;top:1112px;width:2px;height:14px;background:#0069b4"></div>
<svg class="i" style="left:769px;top:1110px" width="17" height="20"><use href="#trash"/></svg>
<div class="t " style="left:1580px;top:348px;font-size:13.8px;line-height:18px;color:#000;">ALL</div>
<div class="t " style="left:798px;top:396px;font-size:13.8px;line-height:18px;color:#000;">SoSe 2024</div>
<div class="t " style="left:857px;top:396px;font-size:13.8px;line-height:18px;color:#000;width:80px;text-align:right">2.2</div>
<div class="t " style="left:949px;top:396px;font-size:13.8px;line-height:18px;color:#000;">BE</div>
<div class="t " style="left:957px;top:396px;font-size:13.8px;line-height:18px;color:#000;width:80px;text-align:right">180.0</div>
<div class="t " style="left:1381px;top:396px;font-size:13.8px;line-height:18px;color:#000;">20.07.2023</div>
<div class="t " style="left:1480px;top:396px;font-size:13.8px;line-height:18px;color:#000;">1</div>
<div class="t " style="left:1580px;top:396px;font-size:13.8px;line-height:18px;color:#000;">Modulnote</div>
<div class="t " style="left:1580px;top:415px;font-size:13.8px;line-height:18px;color:#000;">(Lehramt)</div>
<div class="t " style="left:1580px;top:479px;font-size:13.8px;line-height:18px;color:#000;">ALL</div>
<div class="t " style="left:1580px;top:545px;font-size:13.8px;line-height:18px;color:#000;">Modulnote</div>
<div class="t " style="left:1580px;top:564px;font-size:13.8px;line-height:18px;color:#000;">(Lehramt)</div>
<div class="t " style="left:798px;top:629px;font-size:13.8px;line-height:18px;color:#000;">SoSe 2024</div>
<div class="t " style="left:857px;top:629px;font-size:13.8px;line-height:18px;color:#000;width:80px;text-align:right">2.2</div>
<div class="t " style="left:949px;top:629px;font-size:13.8px;line-height:18px;color:#000;">BE</div>
<div class="t " style="left:957px;top:629px;font-size:13.8px;line-height:18px;color:#000;width:80px;text-align:right">59.0</div>
<div class="t " style="left:1480px;top:629px;font-size:13.8px;line-height:18px;color:#000;">1</div>
<div class="t " style="left:1580px;top:629px;font-size:13.8px;line-height:18px;color:#000;">Modulnote</div>
<div class="t " style="left:1580px;top:648px;font-size:13.8px;line-height:18px;color:#000;">(Lehramt)</div>
<div class="t " style="left:798px;top:698px;font-size:13.8px;line-height:18px;color:#000;">SoSe 2024</div>
<div class="t " style="left:949px;top:698px;font-size:13.8px;line-height:18px;color:#000;">BE</div>
<div class="t " style="left:957px;top:698px;font-size:13.8px;line-height:18px;color:#000;width:80px;text-align:right">6.0</div>
<div class="t " style="left:1480px;top:698px;font-size:13.8px;line-height:18px;color:#000;">1</div>
<div class="t " style="left:1580px;top:698px;font-size:13.8px;line-height:18px;color:#000;">unbenotet</div>
<div class="t " style="left:1580px;top:717px;font-size:13.8px;line-height:18px;color:#000;">(Lehramt)</div>
<div class="t " style="left:1580px;top:768px;font-size:13.8px;line-height:18px;color:#000;">ALL</div>
<div class="t " style="left:1580px;top:819px;font-size:13.8px;line-height:18px;color:#000;">Modulnote</div>
<div class="t " style="left:1580px;top:838px;font-size:13.8px;line-height:18px;color:#000;">(Lehramt)</div>
<div class="t " style="left:798px;top:888px;font-size:13.8px;line-height:18px;color:#000;">SoSe 2023</div>
<div class="t " style="left:857px;top:888px;font-size:13.8px;line-height:18px;color:#000;width:80px;text-align:right">2.0</div>
<div class="t " style="left:949px;top:888px;font-size:13.8px;line-height:18px;color:#000;">BE</div>
<div class="t " style="left:957px;top:888px;font-size:13.8px;line-height:18px;color:#000;width:80px;text-align:right">42.0</div>
<div class="t " style="left:1480px;top:888px;font-size:13.8px;line-height:18px;color:#000;">1</div>
<div class="t " style="left:1580px;top:888px;font-size:13.8px;line-height:18px;color:#000;">Modulnote</div>
<div class="t " style="left:1580px;top:907px;font-size:13.8px;line-height:18px;color:#000;">(Lehramt)</div>
<div class="t " style="left:798px;top:958px;font-size:13.8px;line-height:18px;color:#000;">SoSe 2023</div>
<div class="t " style="left:949px;top:958px;font-size:13.8px;line-height:18px;color:#000;">BE</div>
<div class="t " style="left:957px;top:958px;font-size:13.8px;line-height:18px;color:#000;width:80px;text-align:right">6.0</div>
<div class="t " style="left:1480px;top:958px;font-size:13.8px;line-height:18px;color:#000;">1</div>
<div class="t " style="left:1580px;top:958px;font-size:13.8px;line-height:18px;color:#000;">unbenotet</div>
<div class="t " style="left:1580px;top:977px;font-size:13.8px;line-height:18px;color:#000;">(Lehramt)</div>
<div class="t " style="left:798px;top:1009px;font-size:13.8px;line-height:18px;color:#000;">WiSe 2024</div>
<div class="t " style="left:949px;top:1009px;font-size:13.8px;line-height:18px;color:#000;">ZU</div>
<div class="t " style="left:1381px;top:1009px;font-size:13.8px;line-height:18px;color:#000;">03.10.2023</div>
<div class="t " style="left:1580px;top:1009px;font-size:13.8px;line-height:18px;color:#000;">ALL</div>
<div class="t " style="left:798px;top:1053px;font-size:13.8px;line-height:18px;color:#000;">WiSe 2024</div>
<div class="t " style="left:949px;top:1053px;font-size:13.8px;line-height:18px;color:#000;">BE</div>
<div class="t " style="left:1050px;top:1053px;font-size:13.8px;line-height:18px;color:#000;">1</div>
<div class="t " style="left:1381px;top:1053px;font-size:13.8px;line-height:18px;color:#000;">03.10.2023</div>
<div class="t " style="left:1480px;top:1053px;font-size:13.8px;line-height:18px;color:#000;">1</div>
<div class="t " style="left:1516px;top:1053px;font-size:13.8px;line-height:18px;color:#000;">Nein</div>
<div class="t " style="left:1580px;top:1053px;font-size:13.8px;line-height:18px;color:#000;">unbenotet</div>
<div class="t " style="left:1580px;top:1072px;font-size:13.8px;line-height:18px;color:#000;">(Lehramt)</div>
<div class="t " style="left:798px;top:1104px;font-size:13.8px;line-height:18px;color:#000;">SoSe 2024</div>
<div class="t " style="left:857px;top:1104px;font-size:13.8px;line-height:18px;color:#000;width:80px;text-align:right">5.0</div>
<div class="t " style="left:949px;top:1104px;font-size:13.8px;line-height:18px;color:#000;">EN</div>
<div class="t " style="left:1050px;top:1104px;font-size:13.8px;line-height:18px;color:#000;">1</div>
<div class="t " style="left:1321px;top:1104px;font-size:13.8px;line-height:18px;color:#000;">Heidi</div>
<div class="t " style="left:1321px;top:1123px;font-size:13.8px;line-height:18px;color:#000;">Fuchs</div>
<div class="t " style="left:1381px;top:1104px;font-size:13.8px;line-height:18px;color:#000;">10.09.2023</div>
<div class="t " style="left:1480px;top:1104px;font-size:13.8px;line-height:18px;color:#000;">1</div>
<div class="t " style="left:1516px;top:1104px;font-size:13.8px;line-height:18px;color:#000;">Nein</div>
<div class="t " style="left:1580px;top:1104px;font-size:13.8px;line-height:18px;color:#000;">1N</div>
<div class="t " style="left:1685px;top:1104px;font-size:13.8px;line-height:18px;color:#000;">Klausur,</div>
<div class="t " style="left:1685px;top:1123px;font-size:13.8px;line-height:18px;color:#000;">schriftlich</div>
<svg class="i" style="left:1207px;top:1056px" width="16" height="13"><use href="#check"/></svg>
</div>
<div class="b" style="left:10px;top:1184px;width:88px;height:20px;border:1px solid #777;background:#fff"></div>
<div class="b" style="left:99px;top:1184px;width:68px;height:20px;border:1px solid #c8c8c8;background:#e2e7ec"></div>
<div class="b" style="left:168px;top:1184px;width:173px;height:20px;border:1px solid #c8c8c8;background:#e2e7ec"></div>
<div class="b" style="left:342px;top:1184px;width:101px;height:20px;border:1px solid #c8c8c8;background:#e2e7ec"></div>
</body></html>
